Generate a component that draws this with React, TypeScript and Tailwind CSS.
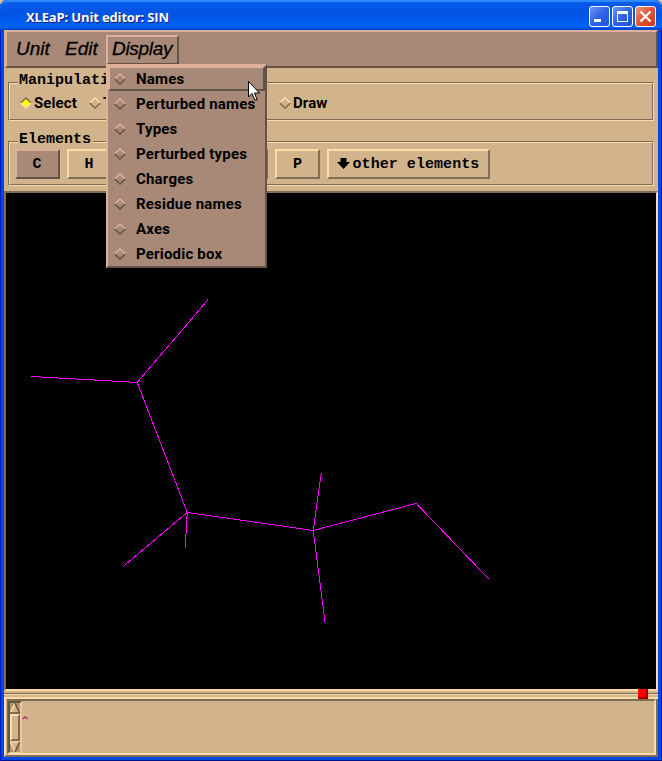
import type { ReactNode } from "react";

const raisedTan = "border-2 border-t-[#ffdba8] border-l-[#ffdba8] border-b-[#7e6c54] border-r-[#7e6c54]";
const raisedBrown = "border-2 border-t-[#dfb09a] border-l-[#dfb09a] border-b-[#655249] border-r-[#655249]";

const displayOptions = [
  "Names",
  "Perturbed names",
  "Types",
  "Perturbed types",
  "Charges",
  "Residue names",
  "Axes",
  "Periodic box",
];

const bonds = [
  [31, 376, 137, 382],
  [208, 299, 137, 382],
  [137, 382, 187, 512],
  [187, 512, 123, 566],
  [187, 512, 185, 548],
  [187, 512, 313, 530],
  [313, 530, 321, 473],
  [313, 530, 325, 623],
  [313, 530, 416, 503],
  [416, 503, 489, 579],
];

function Diamond({ light, dark, fill = "none" }: { light: string; dark: string; fill?: string }) {
  return (
    <svg width="12" height="12" viewBox="0 0 12 12" className="shrink-0">
      <path d="M1 6L6 1L11 6L6 11Z" fill={fill} />
      <path d="M0.7 6L6 0.9L11.3 6" fill="none" stroke={light} strokeWidth="1.5" />
      <path d="M0.7 6L6 11.1L11.3 6" fill="none" stroke={dark} strokeWidth="1.5" />
    </svg>
  );
}

function Group({ title, className, children }: { title: string; className: string; children: ReactNode }) {
  return (
    <section className={`relative mx-1 flex shrink-0 flex-col border border-t-[#7e6c54] border-l-[#7e6c54] border-b-[#ffdba8] border-r-[#ffdba8] ${className}`}>
      <div className="flex flex-1 items-center border border-t-[#ffdba8] border-l-[#ffdba8] border-b-[#7e6c54] border-r-[#7e6c54]">{children}</div>
      <h2 className="absolute -top-[11px] left-[9px] h-[17px] bg-[#d2b48c] pr-0.5 pl-px font-['Liberation_Mono',monospace] text-[15px] leading-[18px] font-bold">
        {title}
      </h2>
    </section>
  );
}

function ElementButton({ label, active = false }: { label?: string; active?: boolean }) {
  return (
    <button className={`h-[30px] w-[45px] shrink-0 pt-[3px] pr-px font-['Liberation_Mono',monospace] text-[15px] font-bold ${active ? `bg-[#a88977] ${raisedBrown}` : raisedTan}`}>
      {label}
    </button>
  );
}

function TitleBar() {
  const box = "flex h-[21px] w-[21px] items-center justify-center rounded-[3px] border border-white";
  return (
    <header className="flex h-[30px] shrink-0 items-center rounded-t-[7px] bg-linear-to-b from-[#0a5be8] via-[#0054e3] to-[#0066ff] pt-[3px] pr-1.5 pl-[26px] shadow-[inset_0_2px_1px_#2f8bff,inset_0_-2px_1px_#0046d5]">
      <span className="flex-1 pt-0.5 font-['Open_Sans',sans-serif] text-[13px] font-bold tracking-[-0.15px] whitespace-nowrap text-white [text-shadow:1px_1px_0_#0a1f7c]">
        XLEaP: Unit editor: SIN
      </span>
      <div className="flex gap-0.5">
        <div className={`${box} bg-linear-to-br from-[#6e94f4] via-[#2f62e4] to-[#1f55dc]`}>
          <svg width="19" height="19"><rect x="4" y="12" width="7" height="3" fill="#fff" /></svg>
        </div>
        <div className={`${box} bg-linear-to-br from-[#6e94f4] via-[#2f62e4] to-[#1f55dc]`}>
          <svg width="19" height="19" shapeRendering="crispEdges">
            <path d="M4 4H15V15H4ZM5 7V14H14V7Z" fill="#fff" fillRule="evenodd" />
          </svg>
        </div>
        <div className={`${box} bg-linear-to-br from-[#f0917a] via-[#e0532f] to-[#cc3a10]`}>
          <svg width="19" height="19"><path d="M4.5 4.5L14.5 14.5M14.5 4.5L4.5 14.5" stroke="#fff" strokeWidth="2.4" /></svg>
        </div>
      </div>
    </header>
  );
}

function DisplayMenu() {
  return (
    <div className={`absolute top-[64px] left-[106px] h-[204px] w-[161px] bg-[#a88977] font-['Roboto',sans-serif] ${raisedBrown}`}>
      {displayOptions.map((name, i) => (
        <div key={name} className={`flex h-[25px] items-center gap-[9px] pl-1 text-[15px] font-bold whitespace-nowrap ${i === 0 ? raisedBrown : "border-2 border-transparent"}`}>
          <Diamond light="#dfb09a" dark="#655249" />
          <span className="pt-px pl-px tracking-[0.2px]">{name}</span>
        </div>
      ))}
    </div>
  );
}

export default function App() {
  return (
    <div className="bg-[#d8c0a0]">
      <div className="relative flex h-[761px] w-[662px] flex-col overflow-hidden rounded-t-[7px] bg-[#0046e0] font-['Liberation_Sans',sans-serif] text-black shadow-[inset_1px_0_0_#0019cf,inset_-1px_-1px_0_#00138c]">
        <TitleBar />
        <main className="mr-1 mb-1 ml-1 flex flex-1 flex-col bg-[#d2b48c]">
          <nav className={`ml-px flex h-[38px] shrink-0 items-center bg-[#a88977] text-[19px] italic [-webkit-text-stroke:0.3px_black] ${raisedBrown}`}>
            <span className="w-[49px] pl-[9px]">Unit</span>
            <span className="w-[50px] pl-[9px]">Edit</span>
            <span className={`mt-0.5 flex h-[30px] w-[73px] items-center pb-0.5 pl-1 tracking-[-0.3px] ${raisedBrown}`}>Display</span>
          </nav>
          <Group title="Manipulation" className="mt-[14px] h-[39px]">
            <div className="flex items-center pt-[3px] pl-[10px] font-['Roboto',sans-serif] text-[15px] leading-[18px] font-bold tracking-[0.1px]">
              <span className="flex w-[69px] items-center gap-0.5"><Diamond light="#7e6c54" dark="#ffdba8" fill="#ffff00" />Select</span>
              <span className="flex w-[190px] items-center gap-0.5"><Diamond light="#ffdba8" dark="#7e6c54" />Twist</span>
              <span className="flex items-center gap-0.5"><Diamond light="#ffdba8" dark="#7e6c54" />Draw</span>
            </div>
          </Group>
          <Group title="Elements" className="mt-[20px] h-[45px]">
            <div className="flex items-center gap-[7.1px] pl-[5px]">
              <ElementButton label="C" active />
              <ElementButton label="H" />
              <ElementButton />
              <ElementButton />
              <ElementButton />
              <ElementButton label="P" />
              <button className={`-ml-px flex h-[30px] w-[163px] items-center gap-[3px] pl-2 font-['Liberation_Mono',monospace] text-[15px] font-bold tracking-[0.05px] whitespace-nowrap ${raisedTan}`}>
                <svg width="13" height="11"><path d="M3.5 0H9.5V4H13L6.5 11L0 4H3.5Z" /></svg>
                <span className="pt-[3px]">other elements</span>
              </button>
            </div>
          </Group>
          <section className="mt-[5px] h-[500px] shrink-0 border-2 border-t-[#7e6c54] border-r-[#ffdba8] border-b-[#ffdba8] border-l-[#7e6c54] bg-black">
            <svg width="650" height="496" viewBox="6 193 650 496" shapeRendering="crispEdges">
              {bonds.map(([a, b, c, d], i) => (
                <line key={i} x1={a + 0.2} y1={b + 0.45} x2={c + 0.2} y2={d + 0.45} stroke="#ff00ff" strokeWidth="1" />
              ))}
            </svg>
          </section>
          <div className="relative flex h-2 shrink-0 flex-col justify-between pt-0.5">
            <div className="h-0.5 border-t border-b border-t-[#7e6c54] border-b-[#ffdba8]" />
            <div className="h-0.5 bg-[#ffdba8]" />
            <div className="absolute -top-0.5 right-[10px] h-[10px] w-[10px] border-r-2 border-b-2 border-[#a80000] bg-[#ff0000]" />
          </div>
          <section className="flex flex-1 border-r-2 border-b-2 border-l-2 border-r-[#7e6c54] border-b-[#7e6c54] border-l-[#ffdba8]">
            <div className="ml-px flex flex-1 border-t-2 border-r-2 border-b-2 border-l border-t-[#7e6c54] border-r-[#ffdba8] border-b-[#ffdba8] border-l-[#7e6c54]">
              <div className="flex w-[14px] flex-col border-t-2 border-r-2 border-b border-l-2 border-t-[#655640] border-r-[#eec89b] border-b-[#eec89b] border-l-[#655640] bg-[#b3976f]">
                <svg width="10" height="11"><path d="M5 0L10 10H0Z" fill="#d2b48c" /><path d="M5 0L0.5 10" stroke="#ffdba8" strokeWidth="1.5" /><path d="M5 0L9.5 10H0" fill="none" stroke="#655640" strokeWidth="1.5" /></svg>
                <div className={`flex-1 bg-[#d2b48c] ${raisedTan}`} />
                <svg width="10" height="11"><path d="M0 1H10L5 11Z" fill="#d2b48c" /><path d="M5 11L0.5 1H10" fill="none" stroke="#ffdba8" strokeWidth="1.5" /><path d="M9.5 1L5 11" stroke="#655640" strokeWidth="1.5" /></svg>
              </div>
              <svg width="6" height="4" className="mt-[15px]"><path d="M0.5 3L3 1L5.5 3" fill="none" stroke="#b03060" strokeWidth="1.5" /></svg>
            </div>
          </section>
        </main>
        <DisplayMenu />
        <svg className="absolute top-[81px] left-[248px]" width="13" height="21" viewBox="0 0 13 21">
          <path d="M0.5 0.5V16L4 12.5L6.8 19H9.2L6.5 12H11.5Z" fill="#fff" stroke="#000" />
        </svg>
      </div>
    </div>
  );
}
